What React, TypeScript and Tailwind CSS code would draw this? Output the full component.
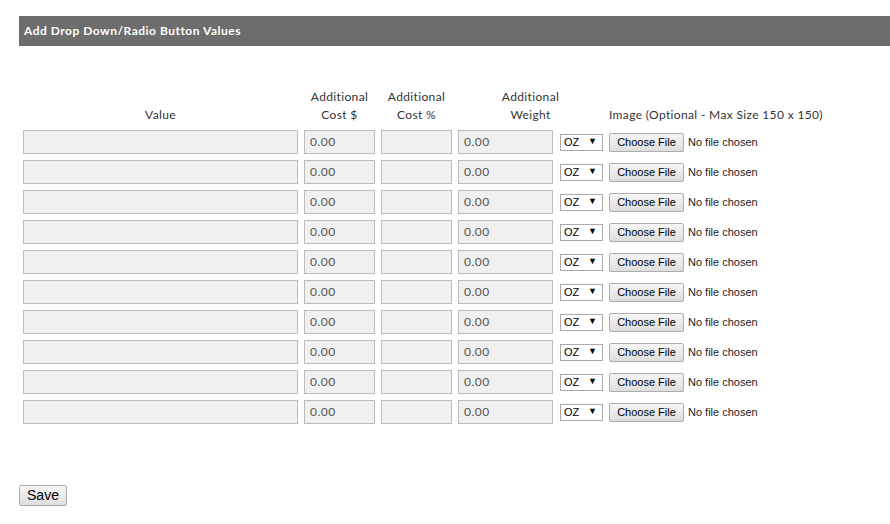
const rows = Array.from({ length: 10 }, (_, i) => i);

function FakeInput({ w, value }: { w: string; value?: string }) {
  return (
    <div
      className={`${w} h-6 border border-[#bcbcbc] bg-[#f0f0f0] flex items-center px-[5px] text-[12px] tracking-[0.5px] text-[#555] font-['Lato',sans-serif]`}
    >
      {value}
    </div>
  );
}

function Row() {
  return (
    <div className="flex items-center h-6">
      <FakeInput w="w-[275px]" />
      <div className="ml-[6px]">
        <FakeInput w="w-[71px]" value="0.00" />
      </div>
      <div className="ml-[6px]">
        <FakeInput w="w-[71px]" />
      </div>
      <div className="ml-[6px]">
        <FakeInput w="w-[95px]" value="0.00" />
      </div>
      {/* unit select */}
      <div className="ml-[7px] w-[43px] h-[17px] border border-[#a9a9a9] bg-white flex items-center justify-between pl-[3px] pr-[5px] text-[11px] text-black font-['Liberation_Sans',Arial,sans-serif]">
        <span>OZ</span>
        <span className="text-[9px]">▼</span>
      </div>
      {/* file input */}
      <div className="ml-[6px] h-[19px] w-[75px] border border-[#adadad] rounded-[2px] bg-gradient-to-b from-[#f6f6f6] to-[#dedede] flex items-center justify-center text-[11px] text-black font-['Liberation_Sans',Arial,sans-serif]">
        Choose File
      </div>
      <span className="ml-[4px] text-[11px] text-[#222] font-['Liberation_Sans',Arial,sans-serif]">
        No file chosen
      </span>
    </div>
  );
}

export default function App() {
  return (
    <div className="w-[890px] h-[524px] bg-white overflow-hidden font-['Lato',sans-serif]">
      <div className="pt-4 pl-[19px]">
        <div className="h-[30px] bg-[#6d6d6d] flex items-center pl-[5px] text-white text-[12px] font-bold tracking-[0.5px]">
          Add Drop Down/Radio Button Values
        </div>
      </div>

      <div className="pl-[23px] pt-[42px]">
        {/* column headers */}
        <div className="flex items-end text-[12px] leading-[18px] tracking-[0.35px] text-[#333] text-center">
          <div className="w-[275px]">Value</div>
          <div className="ml-[6px] w-[71px]">
            Additional
            <br />
            Cost $
          </div>
          <div className="ml-[6px] w-[71px]">
            Additional
            <br />
            Cost %
          </div>
          <div className="ml-[6px] w-[145px]">
            Additional
            <br />
            Weight
          </div>
          <div className="ml-[6px] text-left">Image (Optional - Max Size 150 x 150)</div>
        </div>

        <div className="flex flex-col gap-[6px] mt-[6px]">
          {rows.map((i) => (
            <Row key={i} />
          ))}
        </div>
      </div>

      <div className="pl-[19px] pt-[61px]">
        <div className="w-12 h-[21px] border border-[#a9a9a9] rounded-[2px] bg-gradient-to-b from-[#f6f6f6] to-[#dedede] flex items-center justify-center text-[14px] text-black font-['Liberation_Sans',Arial,sans-serif]">
          Save
        </div>
      </div>
    </div>
  );
}
